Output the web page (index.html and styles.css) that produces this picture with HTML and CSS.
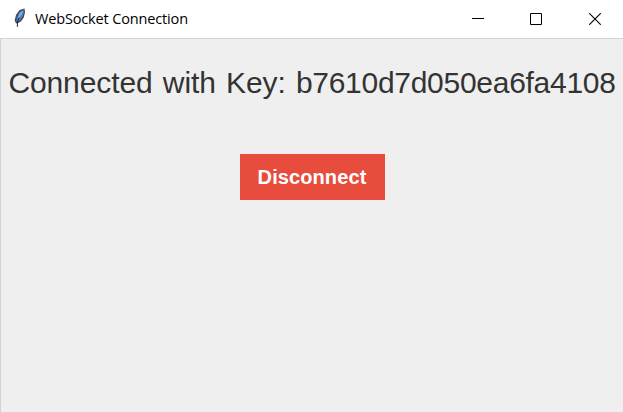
FILE: index.html
```html
<!DOCTYPE html>
<html lang="en">
<head>
<meta charset="utf-8">
<title>WebSocket Connection</title>
<link rel="stylesheet" href="styles.css">
</head>
<body>
<div class="window">
  <header class="titlebar">
    <svg class="feather" width="14" height="22" viewBox="0 0 14 22">
      <path d="M11.600 1.500 6.500 3 3 8 1.700 13.300 3 16.500l2-.5 3-1.500 2.700-4L12 5.500z" fill="#464b53"/>
      <path d="M10.500 3 6.500 5 4 10l-.8 4.500L7 13.500l3-5 1-4z" fill="#4a80c6"/>
      <path d="M9.500 3.500 6.500 6.500 5 11l2-1 2.500-4z" fill="#80afe5"/>
      <path d="M6 11 4.600 14.500 4.300 19.800" fill="none" stroke="#20252d" stroke-width="1"/>
    </svg>
    <span class="title">WebSocket Connection</span>
    <div class="controls">
      <svg width="12" height="12" viewBox="0 0 12 12"><path d="M0 5.500h12" stroke="#000"/></svg>
      <svg width="12" height="12" viewBox="0 0 12 12"><path d="M.5.5h11v11H.5z" fill="none" stroke="#000"/></svg>
      <svg class="close" width="12" height="12" viewBox="0 0 12 12"><path d="M.2.2l11.600 11.600M11.800.2.2 11.800" stroke="#000" stroke-width="1.100"/></svg>
    </div>
  </header>
  <main class="content">
    <p class="status">Connected with Key: <span class="key">b7610d7d050ea6fa4108</span></p>
    <button class="disconnect">Disconnect</button>
  </main>
</div>
</body>
</html>
```
FILE: styles.css
```css
* { box-sizing: border-box; }
body { margin: 0; background: #efefef; }
.window { display: flex; flex-direction: column; height: 412px; overflow: hidden; }
.titlebar { display: flex; align-items: center; height: 38px; padding: 0 22px 0 13px; background: #fff; }
.feather { flex: none; margin: -3px 8px 0 0; }
.title { flex: 1; font: 14.5px/20px "Open Sans", "Noto Sans", sans-serif; letter-spacing: -0.15px; color: #000; white-space: nowrap; }
.controls { display: flex; gap: 46px; }
.close { margin-left: 1px; }
.content { flex: 1; display: flex; flex-direction: column; align-items: center; padding-top: 26px; background: #efefef; border-top: 1px solid #d3d3d3; border-left: 1px solid #d3d3d3; }
.status { margin: 0; font: 30px/36px "Liberation Sans", Arial, sans-serif; letter-spacing: -0.1px; word-spacing: 2px; color: #333; white-space: nowrap; }
.key { letter-spacing: -0.28px; }
.disconnect { width: 145px; height: 46px; margin: 53px 0 0; padding: 0; border: 0; background: #e84c3d; color: #fff; font: bold 20px/46px "Liberation Sans", Arial, sans-serif; letter-spacing: 0.1px; }
```
